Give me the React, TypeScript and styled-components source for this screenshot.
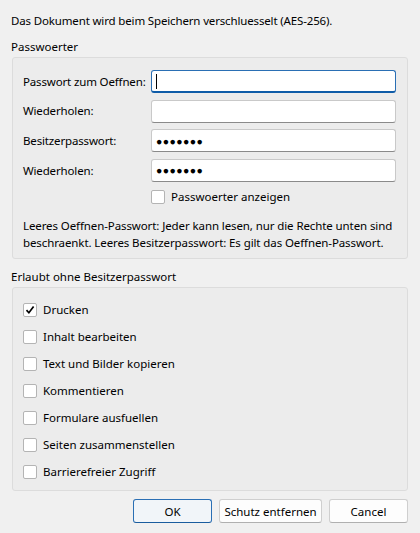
import styled, { createGlobalStyle } from 'styled-components'

const GlobalStyle = createGlobalStyle`
  html, body {
    margin: 0;
    padding: 0;
    background: #f0f0f0;
  }
  body {
    font-family: "Noto Sans", "Open Sans", sans-serif;
    font-size: 11.5px;
    color: #000;
  }
`

const Dialog = styled.div`
  width: 420px;
  height: 533px;
  box-sizing: border-box;
  padding: 12px 12px 0 12px;
  display: flex;
  flex-direction: column;
`

const Intro = styled.div`
  line-height: 17px;
  margin-left: -1px;
  letter-spacing: -0.15px;
`

const SectionTitle = styled.div`
  line-height: 16px;
  margin: 10px 0 2px -1px;
`

const Group = styled.div<{ $height: number }>`
  box-sizing: border-box;
  height: ${p => p.$height}px;
  width: 396px;
  border: 1px solid #dcdcdc;
  border-radius: 3px;
  background: #ececec;
`

const PasswordGroup = styled(Group)`
  padding: 12px 11px 0 10px;
`

const FormGrid = styled.div`
  display: grid;
  grid-template-columns: 128px 245px;
  row-gap: 6.7px;
  align-items: center;
`

const Label = styled.label`
  line-height: 16px;
  white-space: nowrap;
  letter-spacing: -0.15px;
`

const Field = styled.div<{ $focused?: boolean }>`
  box-sizing: border-box;
  height: 23px;
  background: #fff;
  border: 1px solid ${p => (p.$focused ? '#2a6fb4' : '#c9c9c9')};
  border-bottom: ${p => (p.$focused ? '2px solid #0f5ca8' : '1px solid #8a8a8a')};
  border-radius: 3px;
  display: flex;
  align-items: center;
  padding-left: 4px;
`

const Caret = styled.span`
  display: block;
  width: 1px;
  height: 15px;
  background: #000;
`

const Dots = styled.span`
  font-size: 10.5px;
  letter-spacing: 0.4px;
  line-height: 1;
`

const CheckRow = styled.div`
  display: flex;
  align-items: center;
  gap: 6px;
  height: 16px;
  line-height: 16px;
  white-space: nowrap;
`

const Box = styled.span`
  box-sizing: border-box;
  width: 14px;
  height: 14px;
  background: #fff;
  border: 1px solid #b4b4b4;
  border-radius: 2px;
  display: flex;
  align-items: center;
  justify-content: center;
  flex-shrink: 0;
`

const ShowRow = styled(CheckRow)`
  grid-column: 2;
`

const Note = styled.p`
  margin: 12px 0 0 0;
  line-height: 17px;
  white-space: nowrap;
  letter-spacing: -0.1px;
`

const PermGroup = styled(Group)`
  padding: 14px 10px 0 10px;
  display: flex;
  flex-direction: column;
  gap: 11px;
`

const ButtonBar = styled.div`
  display: flex;
  justify-content: flex-end;
  gap: 7px;
  margin-top: 8px;
  width: 396px;
`

const Button = styled.button<{ $width: number; $default?: boolean }>`
  box-sizing: border-box;
  width: ${p => p.$width}px;
  height: 24px;
  font-family: inherit;
  font-size: 11.5px;
  color: #000;
  border-radius: 3px;
  border: 1px solid ${p => (p.$default ? '#2a6fb4' : '#cfcfcf')};
  border-bottom-color: ${p => (p.$default ? '#1a5c9e' : '#b0b0b0')};
  background: ${p => (p.$default ? '#f1f5f9' : '#fdfdfd')};
  padding: 0;
`

function Check({ checked }: { checked?: boolean }) {
  return (
    <Box>
      {checked && (
        <svg width="10" height="10" viewBox="0 0 10 10">
          <path d="M1.5 5.2 L3.9 7.8 L8.6 1.6" fill="none" stroke="#000" strokeWidth="1.7" />
        </svg>
      )}
    </Box>
  )
}

const permissions = [
  { text: 'Drucken', checked: true },
  { text: 'Inhalt bearbeiten' },
  { text: 'Text und Bilder kopieren' },
  { text: 'Kommentieren' },
  { text: 'Formulare ausfuellen' },
  { text: 'Seiten zusammenstellen' },
  { text: 'Barrierefreier Zugriff' },
]

export default function App() {
  return (
    <Dialog>
      <GlobalStyle />
      <Intro>Das Dokument wird beim Speichern verschluesselt (AES-256).</Intro>

      <SectionTitle>Passwoerter</SectionTitle>
      <PasswordGroup $height={202}>
        <FormGrid>
          <Label>Passwort zum Oeffnen:</Label>
          <Field $focused>
            <Caret />
          </Field>
          <Label>Wiederholen:</Label>
          <Field />
          <Label>Besitzerpasswort:</Label>
          <Field>
            <Dots>●●●●●●●</Dots>
          </Field>
          <Label>Wiederholen:</Label>
          <Field>
            <Dots>●●●●●●●</Dots>
          </Field>
          <ShowRow>
            <Check />
            <span>Passwoerter anzeigen</span>
          </ShowRow>
        </FormGrid>
        <Note>
          Leeres Oeffnen-Passwort: Jeder kann lesen, nur die Rechte unten sind
          <br />
          beschraenkt. Leeres Besitzerpasswort: Es gilt das Oeffnen-Passwort.
        </Note>
      </PasswordGroup>

      <SectionTitle>Erlaubt ohne Besitzerpasswort</SectionTitle>
      <PermGroup $height={204}>
        {permissions.map(p => (
          <CheckRow key={p.text}>
            <Check checked={p.checked} />
            <span>{p.text}</span>
          </CheckRow>
        ))}
      </PermGroup>

      <ButtonBar>
        <Button $width={79} $default>OK</Button>
        <Button $width={103}>Schutz entfernen</Button>
        <Button $width={79}>Cancel</Button>
      </ButtonBar>
    </Dialog>
  )
}
